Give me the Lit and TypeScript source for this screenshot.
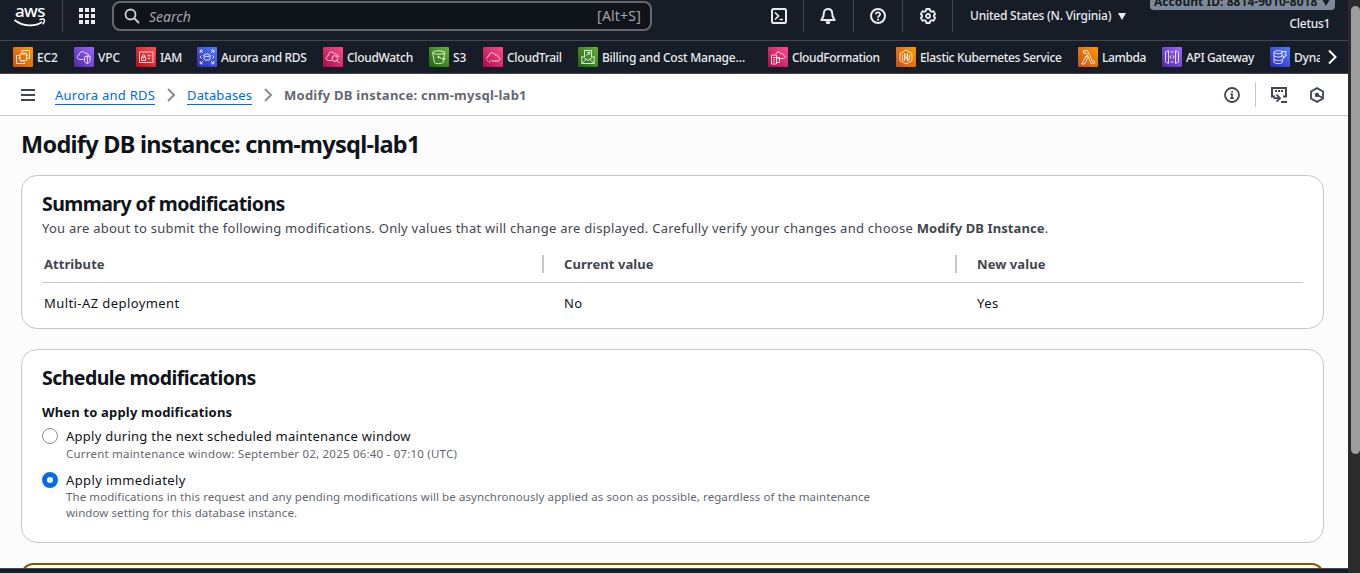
import { LitElement, html, svg, css } from "lit";
import { customElement } from "lit/decorators.js";

interface Service {
  name: string;
  width: number;
  tone: string;
  tracking: number;
  glyph: unknown;
}

const services: Service[] = [
  { name: "EC2", width: 21, tone: "orange", tracking: -0.15, glyph: svg`<path d="M7 7h6.500v6.500h-6.500zM8.500 5.500v1.500M10.500 5.500v1.500M12.500 5.500v1.500M8.500 13.500v1.500M10.500 13.500v1.500M5.500 8.500h1.500M5.500 11h1.500M13.500 8.500h1.500M13.500 11h1.500M9 5V3.500h7.500v8H15M4.800 8.500H3.500v8h8v-1.300"/>` },
  { name: "VPC", width: 22, tone: "purple", tracking: -0.15, glyph: svg`<path d="M9.500 12.500H6c-3.300 0-3.500-4-.8-4.600C5.500 4 10 3.500 11.300 6.500c1.500-1 3 .2 2.900 1.700 1 .1 1.800.8 2 1.600M10.500 10l2.800-1.200 2.800 1.200v3.500c0 1.500-1.500 2.500-2.800 3.200-1.300-.7-2.800-1.700-2.800-3.200zM13.300 9v7.500"/>` },
  { name: "IAM", width: 21, tone: "red", tracking: -0.4, glyph: svg`<path d="M3.500 5h13.500v10.500h-13.500zM5.500 10h4v3.500h-4zM6.400 10V8.700a1.100 1.100 0 0 1 2.200 0V10M11.500 8.700h3.500M11.500 11.500h2.500M7.500 11.200v1"/>` },
  { name: "Aurora and RDS", width: 86, tone: "blue", tracking: -0.34, glyph: svg`<path d="M3.200 6V3.200H6M3.400 3.400l2.600 2.600M14 3.200h2.800V6M16.600 3.400 14 6M3.200 14v2.800H6M3.400 16.600 6 14M14 16.800h2.800V14M16.600 16.600 14 14M4.500 8.500 3 10l1.500 1.500M15.500 8.500 17 10l-1.500 1.500M7 8.300c0-1.700 6-1.700 6 0s-6 1.700-6 0v3.600c0 1.700 6 1.700 6 0V8.300"/>` },
  { name: "CloudWatch", width: 66, tone: "pink", tracking: -0.32, glyph: svg`<path d="M8.500 13.500H6c-3.500 0-3.600-4-.8-4.600C5.300 4.500 10 3.500 11.300 7c1.500-1 3 0 3 1.600 1 .1 1.700.6 2.200 1.400"/><circle cx="11.800" cy="11.500" r="2.800"/><path d="m14 13.500 2.700 2.700"/>` },
  { name: "S3", width: 14, tone: "green", tracking: -0.1, glyph: svg`<path d="M3.700 5.500c0-2.200 12-2.200 12 0s-12 2.200-12 0l1.700 10c.4 1.500 8.200 1.500 8.600 0l1.700-10M9.500 10.200l5 2c1.700.5 2.200-.5.500-1.500"/><circle cx="9.500" cy="10" r=".7"/>` },
  { name: "CloudTrail", width: 55, tone: "pink", tracking: -0.27, glyph: svg`<path d="M9 14h5.500c3 0 3-3.700.4-4.300-.1-1.700-1.500-2.400-2.700-1.500C11 4.800 6 5 5.800 9.200c-1.700.3-2.500 1.700-2.200 2.800"/><path d="M4.500 13v1M6.500 14v1.500M8 12.500v1"/>` },
  { name: "Billing and Cost Manage…", width: 150, tone: "green", tracking: -0.24, glyph: svg`<path d="M6.500 10V3.500h7V10M3.800 9l6.200 4.500L16.200 9v7.500H3.800zM3.800 16.500l4.400-4.200M16.200 16.500l-4.400-4.200M8.500 8.500 11.500 5.500M9.500 5.500h2v2"/>` },
  { name: "CloudFormation", width: 88, tone: "pink", tracking: -0.37, glyph: svg`<path d="M9.500 11.500H15c2.500 0 2.500-3.100.4-3.500-.1-1.300-1.200-2-2.300-1.300-1.200-2.700-5-2.300-5.100.8M3.500 8h5v9h-5zM5 10.500h6.500v5H8.500M5 12.800h2M5 14.800h2"/>` },
  { name: "Elastic Kubernetes Service", width: 142, tone: "orange", tracking: -0.31, glyph: svg`<path d="M8 3.800 10 3l6 3.400v7.200L10 17l-6-3.400V6.400L8 4.600M6.500 7.500v5l2 1.300V6.200M13.500 7.500v5l-2 1.300V6.200M10 7.500v5M10.200 10l2.300 2.500"/>` },
  { name: "Lambda", width: 44, tone: "orange", tracking: -0.38, glyph: svg`<path d="M5.500 3.500H9.300l5.200 10.800 1.400-.5.900 2-3.300 1.200L8.300 6H5.500zM8.200 8.800l1.300 2.800L6.500 17H3.600z"/>` },
  { name: "API Gateway", width: 68, tone: "purple", tracking: -0.39, glyph: svg`<path d="M6.500 3.500v13L3.500 14.800V5.200zM13.500 3.500v13l3-1.700V5.200zM9 8.500 8 10l1 1.500M11 8.500 12 10l-1 1.500M8.500 5h3M8.500 15h3"/>` },
  { name: "Dynamo", width: 40, tone: "blue", tracking: -0.2, glyph: svg`<path d="M4 5.200c0-2 8.500-2 8.500 0s-8.500 2-8.500 0v9.800c0 2 8.500 2 8.500 0v-2.500M4 8.500c0 1.500 6 2 8 .8M4 12c0 1.500 6 2 8 .8M12 4.500h4.300L14.800 8h1.700l-3.500 4 .8-3h-2z"/>` },
];

@customElement("service-link")
export class ServiceLink extends LitElement {
  static properties = { service: { attribute: false } };
  declare service: Service;

  static styles = css`
    :host { display: flex; flex: none; align-items: flex-start; gap: 4px; height: 20px; }
    .tile { width: 20px; height: 20px; border-radius: 1px; display: block; }
    .tile svg { display: block; width: 20px; height: 20px; fill: none; stroke: #fff; stroke-width: 0.9; stroke-opacity: 0.9; }
    .orange { background: linear-gradient(45deg, #c8511b, #ff9900); }
    .purple { background: linear-gradient(45deg, #4d27aa, #a166ff); }
    .red { background: linear-gradient(45deg, #bd0816, #ff5252); }
    .blue { background: linear-gradient(45deg, #2e27ad, #527fff); }
    .pink { background: linear-gradient(45deg, #b0084d, #ff4f8b); }
    .green { background: linear-gradient(45deg, #1b660f, #6cae3e); }
    .name { white-space: nowrap; color: #ebebf0; font: 500 12px/18px "Noto Sans", sans-serif; padding-top: 2px; }
  `;

  render() {
    const s = this.service;
    return html`
      <span class="tile ${s.tone}"><svg viewBox="0 0 20 20">${s.glyph}</svg></span>
      <span class="name" style="width:${s.width}px;letter-spacing:${s.tracking}px">${s.name}</span>
    `;
  }
}

@customElement("app-root")
export class AppRoot extends LitElement {
  static styles = css`
    :host {
      display: grid;
      grid-template-columns: 1348px 12px;
      height: 573px;
      overflow: hidden;
      background: #fcfcfd;
      color: #0f141a;
      font: 400 13px/20px "Noto Sans", "Open Sans", sans-serif;
      letter-spacing: 0.26px;
    }
    * { box-sizing: border-box; }
    svg { display: block; fill: none; flex: none; }
    h1, h2, p { margin: 0; }
    .page { display: flex; flex-direction: column; height: 573px; overflow: hidden; min-width: 0; }

    .top { flex: none; display: flex; height: 41px; background: #161d26; border-bottom: 1px solid #424650; overflow: hidden; color: #ebebf0; }
    .logo { width: 63px; height: 32px; border-right: 1px solid #424650; padding: 1px 0 0 14px; }
    .logo-text { font: 500 17px/20px "Noto Sans", sans-serif; letter-spacing: -0.5px; width: 32px; text-align: center; color: #fff; }
    .logo-smile { margin-top: -3px; }
    .apps { width: 49px; height: 32px; display: grid; place-items: center; padding-right: 1px; }
    .search { margin-top: 1px; width: 540px; height: 30px; border: 2px solid #656871; border-radius: 8px; background: #0f141a; display: flex; align-items: center; padding: 0 9px 0 10px; color: #a4a4ad; }
    .search-hint { flex: 1; margin-left: 9px; padding-top: 1px; font-size: 14px; font-style: italic; letter-spacing: 0; }
    .search-key { font-size: 14px; letter-spacing: 0.2px; }
    .tools { margin-left: 103px; display: flex; height: 32px; }
    .tool { width: 50px; height: 32px; display: grid; place-items: center; border-right: 1px solid #424650; }
    .tool.first { width: 49px; }
    .tool.bell { padding-right: 1px; }
    .tool.narrow { width: 49px; }
    .region { display: flex; align-items: center; gap: 6px; height: 32px; margin-left: 17px; font-size: 12px; font-weight: 500; letter-spacing: -0.22px; white-space: nowrap; }
    .region-name { width: 142px; }
    .account { margin-left: auto; margin-right: 13px; margin-top: -8px; display: flex; flex-direction: column; align-items: flex-end; flex: none; }
    .badge { display: flex; align-items: center; justify-content: space-between; width: 185px; height: 18px; border-radius: 4px; padding: 2px 5px 0 4px; background: #7d8998; color: #161d26; font: 700 12px/18px "Noto Sans", sans-serif; letter-spacing: 0.05px; white-space: nowrap; }
    .user { font-size: 12px; font-weight: 500; line-height: 16px; letter-spacing: -0.3px; margin: 6px 5px 0 0; }

    .services { flex: none; display: flex; height: 33px; padding-left: 13px; background: #161d26; border-bottom: 1px solid #424650; align-items: center; }
    .strip { display: flex; gap: 16px; width: 1307px; overflow: hidden; }
    .more { margin-left: 8px; }

    .crumbs { flex: none; display: flex; align-items: center; height: 42px; border-bottom: 1px solid #c6c6cd; background: #fff; padding: 0 23px 0 21px; }
    .trail { display: flex; align-items: center; gap: 12px; margin-left: 20px; }
    .link { color: #006ce0; line-height: 18px; padding-top: 1px; border-bottom: 1px solid #006ce0; white-space: nowrap; }
    .wide { width: 100px; }
    .mid { width: 65px; letter-spacing: 0.15px; }
    .current { color: #656871; font-weight: 700; letter-spacing: 0.25px; }
    .aside { margin-left: auto; display: flex; align-items: center; }
    .rule { width: 1px; height: 25px; background: #c6c6cd; margin: 0 15px; }
    .hex { margin-left: 22px; }

    .content { flex: 1; min-height: 0; overflow: hidden; padding: 14px 24px 0 21px; }
    h1 { font-size: 23.5px; line-height: 28px; font-weight: 700; letter-spacing: -0.73px; }
    .card { border: 1px solid #c6c6cd; border-radius: 16px; background: #fff; padding: 16px 20px 0; }
    .summary { margin-top: 17px; height: 154px; }
    .schedule { margin-top: 20px; height: 194px; }
    .notice { margin-top: 20px; height: 60px; border: 2px solid #855900; border-radius: 12px; background: #fffef0; }
    h2 { font-size: 19.5px; line-height: 24px; font-weight: 700; letter-spacing: -0.56px; }
    .lead { margin-top: 2px; color: #424650; white-space: nowrap; }
    .lead b { letter-spacing: 0.1px; }
    .row { display: grid; grid-template-columns: 502px 413px 1fr; }
    .cell { padding-left: 20px; }
    .cell.start { padding-left: 2px; }
    .head { margin-top: 16px; height: 29px; border-bottom: 1px solid #c6c6cd; color: #424650; font-weight: 700; letter-spacing: 0.07px; }
    .head .split { height: 18px; margin-top: 1px; line-height: 18px; border-right: 2px solid #c6c6cd; }
    .body { margin-top: 10px; letter-spacing: 0.42px; }
    .label { margin-top: 12px; font-weight: 700; letter-spacing: 0.17px; }
    .option { display: grid; grid-template-columns: 16px 1fr; column-gap: 8px; margin-top: 4px; }
    .option.next { margin-top: 8px; letter-spacing: 0.38px; }
    .radio { width: 16px; height: 16px; margin-top: 2px; border: 1px solid #8c8c94; border-radius: 50%; background: #fff; }
    .radio.on { border: 5px solid #006ce0; }
    .hint { color: #656871; height: 16px; margin-top: -0.500px; font-size: 11.5px; line-height: 16px; letter-spacing: 0.21px; white-space: nowrap; }
    .hint.long { height: 32px; letter-spacing: 0.08px; }
    .bottom { flex: none; height: 5px; background: #161d26; border-top: 1px solid #424650; }

    .scroll { background: #2b2b2b; padding: 6px 0 0 3px; }
    .thumb { height: 448px; border-radius: 4.500px; background: #9e9e9e; }
  `;

  private chevron() {
    return html`<svg width="8" height="14" viewBox="0 0 8 14"><path d="M1 1l6 6-6 6" stroke="#8c8c94" stroke-width="2"/></svg>`;
  }

  private header() {
    return html`
      <header class="top">
        <div class="logo">
          <div class="logo-text">aws</div>
          <svg class="logo-smile" width="32" height="10" viewBox="0 0 32 10"><path d="M.5 2C9 8.800 21 8.800 28 4" stroke="#fff" stroke-width="1.700"/><path d="M25.500 1.800c2-1 4.500-.9 4.800-.3.300.8-.2 3.200-1.600 4.900" stroke="#fff" stroke-width="1.400"/></svg>
        </div>
        <div class="apps"><svg width="16" height="16" viewBox="0 0 16 16"><path fill="#ebebf0" d="M0 0h4v4H0zM6 0h4v4H6zM12 0h4v4h-4zM0 6h4v4H0zM6 6h4v4H6zM12 6h4v4h-4zM0 12h4v4H0zM6 12h4v4H6zM12 12h4v4h-4z"/></svg></div>
        <div class="search">
          <svg width="16" height="16" viewBox="0 0 16 16" stroke="#d0d0d6" stroke-width="1.800"><circle cx="6.500" cy="6.500" r="5"/><path d="m10 10 5 5"/></svg>
          <span class="search-hint">Search</span><span class="search-key">[Alt+S]</span>
        </div>
        <div class="tools">
          <div class="tool first"><svg width="16" height="16" viewBox="0 0 16 16" stroke="#ebebf0" stroke-width="2"><rect x="1" y="1" width="14" height="14" rx="1.500"/><path d="M4 4.500 7.500 8 4 11.500M8.500 11.500h3.500" stroke-width="1.700"/></svg></div>
          <div class="tool bell"><svg width="16" height="16" viewBox="0 0 16 16" stroke="#ebebf0" stroke-width="2" stroke-linejoin="round"><path d="M8 1C5 1 3.800 3.300 3.800 5.500 3.800 9 2.500 10 1.300 12h13.400C13.500 10 12.200 9 12.200 5.500 12.200 3.300 11 1 8 1z"/><path d="M5.500 13.200h5L9.500 16h-3z" fill="#ebebf0" stroke="none"/></svg></div>
          <div class="tool narrow"><svg width="16" height="16" viewBox="0 0 16 16" stroke="#ebebf0" stroke-width="2"><circle cx="8" cy="8" r="7"/><path d="M5.800 6.300C5.900 3.700 10.300 3.900 10.200 6.300 10.100 7.700 8 7.900 8 9.700" stroke-width="1.700"/><path d="M7 10.800h2v1.800H7z" fill="#ebebf0" stroke="none"/></svg></div>
          <div class="tool"><svg width="16" height="16" viewBox="0 0 16 16" stroke="#ebebf0" stroke-width="1.800" stroke-linejoin="round"><path d="M6.300 1h3.400l.5 2 1.300.8 2-.6 1.700 2.900L13.800 7.500v1l1.400 1.400-1.700 2.900-2-.6-1.300.8-.5 2H6.300l-.5-2-1.300-.8-2 .6L.8 9.900l1.400-1.400v-1L.8 6.100l1.700-2.900 2 .6L5.800 3z"/><circle cx="8" cy="8" r="2"/></svg></div>
        </div>
        <div class="region"><span class="region-name">United States (N. Virginia)</span><svg width="8" height="7" viewBox="0 0 8 7"><path d="M0 0h8L4 7z" fill="#ebebf0"/></svg></div>
        <div class="account">
          <div class="badge"><span>Account ID: 8814-9010-8018</span><svg width="8" height="7" viewBox="0 0 8 7"><path d="M0 0h8L4 7z" fill="#161d26"/></svg></div>
          <div class="user">Cletus1</div>
        </div>
      </header>
      <nav class="services">
        <div class="strip">${services.map((s) => html`<service-link .service=${s}></service-link>`)}</div>
        <svg class="more" width="9" height="16" viewBox="0 0 9 16"><path d="M1 1.500 7.500 8 1 14.500" stroke="#fff" stroke-width="2"/></svg>
      </nav>
      <nav class="crumbs">
        <svg width="14" height="12" viewBox="0 0 14 12"><path d="M0 1h14M0 6h14M0 11h14" stroke="#424650" stroke-width="2"/></svg>
        <div class="trail">
          <span class="link wide">Aurora and RDS</span>${this.chevron()}
          <span class="link mid">Databases</span>${this.chevron()}
          <span class="current">Modify DB instance: cnm-mysql-lab1</span>
        </div>
        <div class="aside">
          <svg width="16" height="16" viewBox="0 0 16 16" stroke="#424650" stroke-width="1.800"><circle cx="8" cy="8" r="7"/><path d="M6.300 7.200H8V11M6 11.300h4M7.200 4.700h1.800" stroke-width="1.600"/></svg>
          <span class="rule"></span>
          <svg width="16" height="16" viewBox="0 0 16 16" stroke="#424650" stroke-width="2"><path d="M4 9.500H1V1h14v8.500h-3"/><path d="M4 4h2M7 4h2M10 4h2M2.500 11.200H8M5.500 7.700l3.500 3.500-3.500 3.500M10 15h6" stroke-width="1.800"/></svg>
          <svg class="hex" width="16" height="16" viewBox="0 0 16 16"><path d="M8 1.100 14 4.500v7L8 14.900 2 11.500v-7z" stroke="#424650" stroke-width="1.800"/><circle cx="8" cy="8" r="2.200" fill="#424650"/><path d="m8 8 6 3" stroke="#424650" stroke-width="1.600"/></svg>
        </div>
      </nav>
    `;
  }

  render() {
    return html`
      <div class="page">
        ${this.header()}
        <main class="content">
          <h1>Modify DB instance: cnm-mysql-lab1</h1>
          <section class="card summary">
            <h2>Summary of modifications</h2>
            <p class="lead">You are about to submit the following modifications. Only values that will change are displayed. Carefully verify your changes and choose <b>Modify DB Instance</b>.</p>
            <div class="row head">
              <div class="cell start split">Attribute</div><div class="cell split">Current value</div><div class="cell">New value</div>
            </div>
            <div class="row body">
              <div class="cell start">Multi-AZ deployment</div><div class="cell">No</div><div class="cell">Yes</div>
            </div>
          </section>
          <section class="card schedule">
            <h2>Schedule modifications</h2>
            <div class="label">When to apply modifications</div>
            <div class="option">
              <span class="radio"></span>
              <div>Apply during the next scheduled maintenance window
                <div class="hint">Current maintenance window: September 02, 2025 06:40 - 07:10 (UTC)</div></div>
            </div>
            <div class="option next">
              <span class="radio on"></span>
              <div>Apply immediately
                <div class="hint long">The modifications in this request and any pending modifications will be asynchronously applied as soon as possible, regardless of the maintenance<br>window setting for this database instance.</div></div>
            </div>
          </section>
          <section class="notice"></section>
        </main>
        <div class="bottom"></div>
      </div>
      <div class="scroll"><div class="thumb"></div></div>
    `;
  }
}
